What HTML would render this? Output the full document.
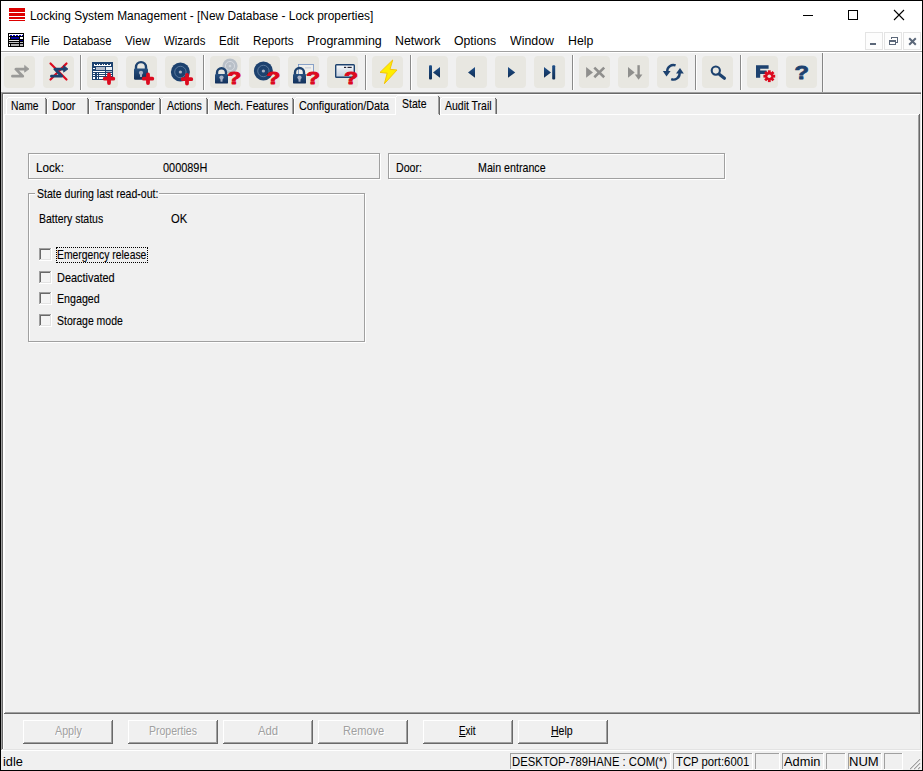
<!DOCTYPE html>
<html><head><meta charset="utf-8"><title>Locking System Management</title>
<style>
html,body{margin:0;padding:0;}
body{width:923px;height:771px;position:relative;overflow:hidden;background:#f0f0f0;font-family:"Liberation Sans",sans-serif;}
body>div,body>svg,body>span{position:absolute;box-sizing:content-box;}
svg{overflow:visible;}
.t{display:inline-block;white-space:nowrap;line-height:1;transform-origin:0 0;}
.d{-webkit-text-stroke:0.12px currentColor;}
.dis{text-shadow:1px 1px 0 #fff;-webkit-text-stroke:0;}
u{text-decoration:underline;text-underline-offset:1px;}
</style></head><body>
<div style="left:0px;top:0px;width:923px;height:771px;background:#f0f0f0;"></div>
<div style="left:1px;top:1px;width:921px;height:50px;background:#ffffff;"></div>
<div style="left:1px;top:51px;width:921px;height:1px;background:#a0a0a0;"></div>
<div style="left:1px;top:52px;width:921px;height:1px;background:#ffffff;"></div>
<div style="left:9px;top:8px;width:16px;height:4px;background:#dd0000;"></div>
<div style="left:9px;top:13px;width:16px;height:3px;background:#dd0000;"></div>
<div style="left:9px;top:17px;width:16px;height:2px;background:#dd0000;"></div>
<div style="left:9px;top:20px;width:16px;height:1px;background:#dd0000;"></div>
<span id="title" class="t " style="left:30.01px;top:9.84px;font-size:12px;color:#000;transform:scaleX(0.9898)">Locking System Management - [New Database - Lock properties]</span>
<div style="left:803px;top:15px;width:10px;height:1px;background:#000;"></div>
<div style="left:848px;top:10px;width:8px;height:8px;border:1px solid #000;background:transparent"></div>
<svg style="left:893px;top:9px" width="12" height="12" viewBox="0 0 12 12"><path d="M1 1 L11 11 M11 1 L1 11" stroke="#000" stroke-width="1.1" fill="none"/></svg>
<svg style="left:8px;top:33px" width="16" height="14" viewBox="0 0 16 14" shape-rendering="crispEdges">
<rect width="16" height="14" fill="#000"/>
<rect x="1" y="1" width="14" height="1" fill="#fff"/>
<rect x="1" y="2" width="14" height="1" fill="#0000c0"/>
<g fill="#fff"><rect x="1" y="2" width="1" height="1"/><rect x="4" y="2" width="1" height="1"/><rect x="7" y="2" width="1" height="1"/><rect x="10" y="2" width="1" height="1"/><rect x="13" y="2" width="1" height="1"/></g>
<rect x="1" y="4" width="1" height="2" fill="#fff"/><rect x="3" y="4" width="8" height="2" fill="#0000a0"/><rect x="12" y="4" width="3" height="2" fill="#fff"/>
<rect x="1" y="7" width="10" height="1" fill="#e0e0e0"/><rect x="12" y="7" width="3" height="1" fill="#000080"/>
<rect x="1" y="9" width="10" height="1" fill="#c0c0c0"/><rect x="12" y="9" width="3" height="1" fill="#c0c0c0"/>
<rect x="1" y="11" width="1" height="2" fill="#fff"/><rect x="3" y="11" width="8" height="2" fill="#b0b0b0"/><rect x="12" y="11" width="3" height="2" fill="#b0b0b0"/>
</svg>
<span id="m0" class="t " style="left:31.24px;top:35.14px;font-size:12px;color:#000;transform:scaleX(0.9650)">File</span>
<span id="m1" class="t " style="left:63.08px;top:35.14px;font-size:12px;color:#000;transform:scaleX(0.9440)">Database</span>
<span id="m2" class="t " style="left:125.17px;top:35.14px;font-size:12px;color:#000;transform:scaleX(0.9712)">View</span>
<span id="m3" class="t " style="left:163.67px;top:35.14px;font-size:12px;color:#000;transform:scaleX(0.9545)">Wizards</span>
<span id="m4" class="t " style="left:218.68px;top:35.14px;font-size:12px;color:#000;transform:scaleX(0.9633)">Edit</span>
<span id="m5" class="t " style="left:253.23px;top:35.14px;font-size:12px;color:#000;transform:scaleX(0.9673)">Reports</span>
<span id="m6" class="t " style="left:306.78px;top:35.14px;font-size:12px;color:#000;transform:scaleX(1.0377)">Programming</span>
<span id="m7" class="t " style="left:395.20px;top:35.14px;font-size:12px;color:#000;transform:scaleX(1.0310)">Network</span>
<span id="m8" class="t " style="left:454.47px;top:35.14px;font-size:12px;color:#000;transform:scaleX(1.0209)">Options</span>
<span id="m9" class="t " style="left:510.13px;top:35.14px;font-size:12px;color:#000;transform:scaleX(1.0290)">Window</span>
<span id="m10" class="t " style="left:567.87px;top:35.14px;font-size:12px;color:#000;transform:scaleX(1.0251)">Help</span>
<div style="left:865px;top:32px;width:16px;height:16px;border:1px solid #e4e4e4;background:#fdfdfd"></div>
<div style="left:884px;top:32px;width:16px;height:16px;border:1px solid #e4e4e4;background:#fdfdfd"></div>
<div style="left:903px;top:32px;width:16px;height:16px;border:1px solid #e4e4e4;background:#fdfdfd"></div>
<div style="left:870px;top:43px;width:6px;height:2px;background:#5b6779;"></div>
<svg style="left:888px;top:36px" width="11" height="10" viewBox="0 0 11 10" shape-rendering="crispEdges"><path d="M3.5 3 V1 H9.5 V6 H8" stroke="#5b6779" stroke-width="1" fill="none"/><rect x="3" y="0.5" width="7" height="1.5" fill="#5b6779"/><rect x="1.5" y="4.5" width="6" height="4" stroke="#5b6779" stroke-width="1" fill="none"/><rect x="1" y="4" width="7" height="1.5" fill="#5b6779"/></svg>
<svg style="left:908px;top:37px" width="9" height="9" viewBox="0 0 9 9"><path d="M1.2 1.2 L7.8 7.8 M7.8 1.2 L1.2 7.8" stroke="#5b6779" stroke-width="2" fill="none"/></svg>
<div style="left:4px;top:56px;width:31px;height:32px;background:#e8e7e1;border-radius:4px;"></div>
<div style="left:43px;top:56px;width:31px;height:32px;background:#e8e7e1;border-radius:4px;"></div>
<div style="left:87px;top:56px;width:31px;height:32px;background:#e8e7e1;border-radius:4px;"></div>
<div style="left:126px;top:56px;width:31px;height:32px;background:#e8e7e1;border-radius:4px;"></div>
<div style="left:165px;top:56px;width:31px;height:32px;background:#e8e7e1;border-radius:4px;"></div>
<div style="left:210px;top:56px;width:31px;height:32px;background:#e8e7e1;border-radius:4px;"></div>
<div style="left:249px;top:56px;width:31px;height:32px;background:#e8e7e1;border-radius:4px;"></div>
<div style="left:288px;top:56px;width:31px;height:32px;background:#e8e7e1;border-radius:4px;"></div>
<div style="left:327px;top:56px;width:31px;height:32px;background:#e8e7e1;border-radius:4px;"></div>
<div style="left:372px;top:56px;width:31px;height:32px;background:#e8e7e1;border-radius:4px;"></div>
<div style="left:417px;top:56px;width:31px;height:32px;background:#e8e7e1;border-radius:4px;"></div>
<div style="left:456px;top:56px;width:31px;height:32px;background:#e8e7e1;border-radius:4px;"></div>
<div style="left:495px;top:56px;width:31px;height:32px;background:#e8e7e1;border-radius:4px;"></div>
<div style="left:534px;top:56px;width:31px;height:32px;background:#e8e7e1;border-radius:4px;"></div>
<div style="left:579px;top:56px;width:31px;height:32px;background:#e8e7e1;border-radius:4px;"></div>
<div style="left:618px;top:56px;width:31px;height:32px;background:#e8e7e1;border-radius:4px;"></div>
<div style="left:657px;top:56px;width:31px;height:32px;background:#e8e7e1;border-radius:4px;"></div>
<div style="left:702px;top:56px;width:31px;height:32px;background:#e8e7e1;border-radius:4px;"></div>
<div style="left:747px;top:56px;width:31px;height:32px;background:#e8e7e1;border-radius:4px;"></div>
<div style="left:786px;top:56px;width:31px;height:32px;background:#e8e7e1;border-radius:4px;"></div>
<div style="left:80px;top:55px;width:1px;height:35px;background:#8a8a8a;"></div>
<div style="left:81px;top:55px;width:1px;height:35px;background:#fff;"></div>
<div style="left:203px;top:55px;width:1px;height:35px;background:#8a8a8a;"></div>
<div style="left:204px;top:55px;width:1px;height:35px;background:#fff;"></div>
<div style="left:365px;top:55px;width:1px;height:35px;background:#8a8a8a;"></div>
<div style="left:366px;top:55px;width:1px;height:35px;background:#fff;"></div>
<div style="left:410px;top:55px;width:1px;height:35px;background:#8a8a8a;"></div>
<div style="left:411px;top:55px;width:1px;height:35px;background:#fff;"></div>
<div style="left:572px;top:55px;width:1px;height:35px;background:#8a8a8a;"></div>
<div style="left:573px;top:55px;width:1px;height:35px;background:#fff;"></div>
<div style="left:695px;top:55px;width:1px;height:35px;background:#8a8a8a;"></div>
<div style="left:696px;top:55px;width:1px;height:35px;background:#fff;"></div>
<div style="left:740px;top:55px;width:1px;height:35px;background:#8a8a8a;"></div>
<div style="left:741px;top:55px;width:1px;height:35px;background:#fff;"></div>
<div style="left:822px;top:53px;width:1px;height:39px;background:#858585;"></div>
<div style="left:823px;top:53px;width:1px;height:39px;background:#f8f8f8;"></div>
<svg style="left:4px;top:56px" width="31" height="32" viewBox="0 0 31 32" ><path d="M8.4 20.2 H18.8 L11.8 13.1 H21" stroke="#9a9a98" stroke-width="2.7" fill="none" stroke-linecap="round" stroke-linejoin="round"/><path d="M20.6 9.4 L25 13 L20.6 16.2 Z" fill="#9a9a98" stroke="#9a9a98" stroke-width="0.7" stroke-linejoin="round"/></svg>
<svg style="left:43px;top:56px" width="31" height="32" viewBox="0 0 31 32" ><path d="M7.5 7.5 L23.5 23.5 M23.5 7.5 L7.5 23.5" stroke="#dc0a1e" stroke-width="2.2" stroke-linecap="round"/><path d="M8.4 20.2 H18.8 L11.8 13.1 H21" stroke="#1d426f" stroke-width="2.7" fill="none" stroke-linecap="round" stroke-linejoin="round"/><path d="M20.6 9.4 L25 13 L20.6 16.2 Z" fill="#1d426f" stroke="#1d426f" stroke-width="0.7" stroke-linejoin="round"/></svg>
<svg style="left:87px;top:56px" width="31" height="32" viewBox="0 0 31 32" ><g shape-rendering="crispEdges"><rect x="5" y="6" width="21" height="18" fill="#1d426f"/><rect x="6.5" y="7.5" width="18" height="2.6" rx="1.2" fill="#fff"/><rect x="8.0" y="8.4" width="1.5" height="0.9" fill="#1d426f"/><rect x="10.6" y="8.4" width="1.5" height="0.9" fill="#1d426f"/><rect x="13.2" y="8.4" width="1.5" height="0.9" fill="#1d426f"/><rect x="15.8" y="8.4" width="1.5" height="0.9" fill="#1d426f"/><rect x="18.4" y="8.4" width="1.5" height="0.9" fill="#1d426f"/><rect x="21.0" y="8.4" width="1.5" height="0.9" fill="#1d426f"/><rect x="6" y="12" width="2" height="1" fill="#fff"/><rect x="9" y="11" width="9" height="3" fill="#b4bccb"/><rect x="19" y="11" width="6" height="3" fill="#e8ecf2"/><rect x="6" y="15" width="12" height="1" fill="#fff"/><rect x="19" y="15" width="6" height="1" fill="#b4bccb"/><rect x="6" y="17" width="2" height="1" fill="#fff"/><rect x="9.5" y="17" width="1.5" height="1" fill="#fff"/><rect x="12" y="17" width="6" height="1" fill="#fff"/><rect x="19" y="17" width="6" height="1" fill="#fff"/><rect x="6" y="19" width="2" height="1" fill="#fff"/><rect x="9.5" y="19" width="1.5" height="1" fill="#fff"/><rect x="12" y="19" width="6" height="1" fill="#fff"/><rect x="19" y="19" width="6" height="1" fill="#fff"/><rect x="6" y="21" width="2" height="2" fill="#fff"/><rect x="9.5" y="21" width="1.5" height="2" fill="#fff"/><rect x="12" y="21" width="6" height="2" fill="#fff"/><rect x="19" y="21" width="6" height="2" fill="#fff"/></g><path d="M17.7 22.7 H26.3 M22 18.4 V27.0" stroke="#dc0a1e" stroke-width="3.8" stroke-linecap="round"/></svg>
<svg style="left:126px;top:56px" width="31" height="32" viewBox="0 0 31 32" ><defs><linearGradient id="ng" x1="0" y1="0" x2="0" y2="1"><stop offset="0" stop-color="#27507f"/><stop offset="1" stop-color="#12305a"/></linearGradient></defs><path d="M10.0 12.9 V11.10 A5.0 5.0 0 0 1 20.0 11.10 V12.9" stroke="#1d426f" stroke-width="2.4" fill="none"/><rect x="8" y="12.4" width="14" height="11.3" rx="1.2" fill="url(#ng)"/><circle cx="15.0" cy="16.85" r="2.1" fill="#aab3c6"/><rect x="14.0" y="17.55" width="2" height="3.4" fill="#aab3c6"/><path d="M17.7 22.7 H26.3 M22 18.4 V27.0" stroke="#dc0a1e" stroke-width="3.8" stroke-linecap="round"/></svg>
<svg style="left:165px;top:56px" width="31" height="32" viewBox="0 0 31 32" ><circle cx="15.4" cy="16" r="9.5" fill="#1d426f"/><circle cx="15.4" cy="16" r="5.70" fill="none" stroke="#5f7d9f" stroke-width="0.9"/><circle cx="15.4" cy="16" r="1.62" fill="#aab3c6"/><path d="M17.7 23.2 H26.3 M22 18.9 V27.5" stroke="#dc0a1e" stroke-width="3.8" stroke-linecap="round"/></svg>
<svg style="left:210px;top:56px" width="31" height="32" viewBox="0 0 31 32" ><defs><linearGradient id="ng" x1="0" y1="0" x2="0" y2="1"><stop offset="0" stop-color="#27507f"/><stop offset="1" stop-color="#12305a"/></linearGradient></defs><circle cx="20" cy="10" r="7.6" fill="#b9c0c8"/><circle cx="20" cy="10" r="4.56" fill="none" stroke="#d9dde2" stroke-width="0.9"/><circle cx="20" cy="10" r="1.29" fill="#d3d7dd"/><path d="M7.0 18.5 V16.70 A4.5 4.5 0 0 1 16.0 16.70 V18.5" stroke="#1d426f" stroke-width="2.4" fill="none"/><rect x="5" y="18" width="13" height="9.6" rx="1.2" fill="url(#ng)"/><circle cx="11.5" cy="21.6" r="2.1" fill="#aab3c6"/><rect x="10.5" y="22.3" width="2" height="3.4" fill="#aab3c6"/><text transform="translate(17.6,27.5) scale(1.32,1)" font-family="Liberation Sans, sans-serif" font-weight="bold" font-size="17" fill="#dc0a1e" stroke="#dc0a1e" stroke-width="1.0" stroke-linejoin="round">?</text></svg>
<svg style="left:249px;top:56px" width="31" height="32" viewBox="0 0 31 32" ><circle cx="14.4" cy="15" r="9.5" fill="#1d426f"/><circle cx="14.4" cy="15" r="5.70" fill="none" stroke="#5f7d9f" stroke-width="0.9"/><circle cx="14.4" cy="15" r="1.62" fill="#aab3c6"/><text transform="translate(17.4,27.5) scale(1.32,1)" font-family="Liberation Sans, sans-serif" font-weight="bold" font-size="17" fill="#dc0a1e" stroke="#dc0a1e" stroke-width="1.0" stroke-linejoin="round">?</text></svg>
<svg style="left:288px;top:56px" width="31" height="32" viewBox="0 0 31 32" ><defs><linearGradient id="ng" x1="0" y1="0" x2="0" y2="1"><stop offset="0" stop-color="#27507f"/><stop offset="1" stop-color="#12305a"/></linearGradient></defs><rect x="10.5" y="8.5" width="15" height="10" fill="#efefec" stroke="#6f8fc0" stroke-width="0.8"/><rect x="17" y="11.5" width="6" height="0.8" fill="#b8c0cf"/><path d="M7.0 18.5 V16.50 A4.5 4.5 0 0 1 16.0 16.50 V18.5" stroke="#1d426f" stroke-width="2.4" fill="none"/><rect x="5" y="18" width="13" height="9.6" rx="1.2" fill="url(#ng)"/><circle cx="11.5" cy="21.6" r="2.1" fill="#aab3c6"/><rect x="10.5" y="22.3" width="2" height="3.4" fill="#aab3c6"/><text transform="translate(18.2,27.5) scale(1.32,1)" font-family="Liberation Sans, sans-serif" font-weight="bold" font-size="17" fill="#dc0a1e" stroke="#dc0a1e" stroke-width="1.0" stroke-linejoin="round">?</text></svg>
<svg style="left:327px;top:56px" width="31" height="32" viewBox="0 0 31 32" ><defs><linearGradient id="cg" x1="0" y1="0" x2="0" y2="1"><stop offset="0" stop-color="#ffffff"/><stop offset="0.35" stop-color="#e4e9f0"/><stop offset="1" stop-color="#c3cfdf"/></linearGradient></defs><rect x="8.7" y="8.7" width="18.6" height="12.6" rx="0.8" fill="url(#cg)" stroke="#1d426f" stroke-width="1.4"/><rect x="17" y="10.8" width="2.2" height="1.2" fill="#223"/><rect x="20.5" y="10.8" width="4.2" height="1.2" fill="#223"/><text transform="translate(17.2,27.5) scale(1.32,1)" font-family="Liberation Sans, sans-serif" font-weight="bold" font-size="17" fill="#dc0a1e" stroke="#dc0a1e" stroke-width="1.0" stroke-linejoin="round">?</text></svg>
<svg style="left:372px;top:56px" width="31" height="32" viewBox="0 0 31 32" ><path d="M20.7 4 L8 16.4 L15.2 17.2 L12.4 27.7 L25 14 L18 13.3 Z" fill="#ffee00" stroke="#f4c40a" stroke-width="1" stroke-linejoin="round"/></svg>
<svg style="left:417px;top:56px" width="31" height="32" viewBox="0 0 31 32" ><defs><linearGradient id="nv" x1="0" y1="0" x2="0" y2="1"><stop offset="0" stop-color="#1f4f88"/><stop offset="1" stop-color="#102e55"/></linearGradient></defs><rect x="12" y="9.2" width="3" height="14.4" rx="1" fill="url(#nv)"/><path d="M16 16.4 L23 11 V21.8 Z" fill="url(#nv)"/></svg>
<svg style="left:456px;top:56px" width="31" height="32" viewBox="0 0 31 32" ><defs><linearGradient id="nv" x1="0" y1="0" x2="0" y2="1"><stop offset="0" stop-color="#1f4f88"/><stop offset="1" stop-color="#102e55"/></linearGradient></defs><path d="M12 16.4 L19 11 V21.8 Z" fill="url(#nv)"/></svg>
<svg style="left:495px;top:56px" width="31" height="32" viewBox="0 0 31 32" ><defs><linearGradient id="nv" x1="0" y1="0" x2="0" y2="1"><stop offset="0" stop-color="#1f4f88"/><stop offset="1" stop-color="#102e55"/></linearGradient></defs><path d="M20.2 16.4 L13 11 V21.8 Z" fill="url(#nv)"/></svg>
<svg style="left:534px;top:56px" width="31" height="32" viewBox="0 0 31 32" ><defs><linearGradient id="nv" x1="0" y1="0" x2="0" y2="1"><stop offset="0" stop-color="#1f4f88"/><stop offset="1" stop-color="#102e55"/></linearGradient></defs><path d="M17 16.4 L10 11 V21.8 Z" fill="url(#nv)"/><rect x="18.2" y="9.2" width="3" height="14.4" rx="1" fill="url(#nv)"/></svg>
<svg style="left:579px;top:56px" width="31" height="32" viewBox="0 0 31 32" ><path d="M14 16.4 L7.1 11 V21.8 Z" fill="#8f8f8d"/><path d="M15.3 11.6 L25.2 21.2 M25.2 11.6 L15.3 21.2" stroke="#8f8f8d" stroke-width="2.6" stroke-linecap="butt"/></svg>
<svg style="left:618px;top:56px" width="31" height="32" viewBox="0 0 31 32" ><path d="M16.7 16.4 L10 11 V21.8 Z" fill="#8f8f8d"/><path d="M20.6 9.2 V20" stroke="#8f8f8d" stroke-width="2.4"/><path d="M16.8 18.6 H24.4 L20.6 23.8 Z" fill="#8f8f8d"/></svg>
<svg style="left:657px;top:56px" width="31" height="32" viewBox="0 0 31 32" ><path d="M18.6 9.4 A6.2 6.2 0 0 0 10.2 15.5" stroke="#1d426f" stroke-width="2.4" fill="none"/><path d="M5.8 15 H13.6 L9.5 20.4 Z" fill="#1d426f"/><path d="M14.2 23.2 A6.2 6.2 0 0 0 22.6 17" stroke="#1d426f" stroke-width="2.4" fill="none"/><path d="M19 17.6 H26.8 L23 12 Z" fill="#1d426f"/></svg>
<svg style="left:702px;top:56px" width="31" height="32" viewBox="0 0 31 32" ><circle cx="13.8" cy="14.6" r="4.1" fill="none" stroke="#1d426f" stroke-width="2.1"/><path d="M17.6 18.4 L22.4 22.2" stroke="#1d426f" stroke-width="3.2" stroke-linecap="round"/></svg>
<svg style="left:747px;top:56px" width="31" height="32" viewBox="0 0 31 32" ><path d="M9 9.2 H21.6 V12.8 H13.2 V14.6 H19.6 V18 H13.2 V21.8 H9 Z" fill="#1d426f"/><g transform="translate(22.3,20.2)"><rect x="-1.4" y="-5.9" width="2.8" height="3" transform="rotate(0)" fill="#dc0a1e"/><rect x="-1.4" y="-5.9" width="2.8" height="3" transform="rotate(45)" fill="#dc0a1e"/><rect x="-1.4" y="-5.9" width="2.8" height="3" transform="rotate(90)" fill="#dc0a1e"/><rect x="-1.4" y="-5.9" width="2.8" height="3" transform="rotate(135)" fill="#dc0a1e"/><rect x="-1.4" y="-5.9" width="2.8" height="3" transform="rotate(180)" fill="#dc0a1e"/><rect x="-1.4" y="-5.9" width="2.8" height="3" transform="rotate(225)" fill="#dc0a1e"/><rect x="-1.4" y="-5.9" width="2.8" height="3" transform="rotate(270)" fill="#dc0a1e"/><rect x="-1.4" y="-5.9" width="2.8" height="3" transform="rotate(315)" fill="#dc0a1e"/><circle r="4.1" fill="#dc0a1e"/><circle r="1.8" fill="#e8e7e1"/></g></svg>
<svg style="left:786px;top:56px" width="31" height="32" viewBox="0 0 31 32" ><text transform="translate(8.6,22.5) scale(1.34,1)" font-family="Liberation Sans, sans-serif" font-weight="bold" font-size="17.6" fill="#1d426f" stroke="#1d426f" stroke-width="0.8" stroke-linejoin="round">?</text></svg>
<div style="left:1px;top:92px;width:920px;height:1px;background:#a0a0a0;"></div>
<div style="left:2px;top:93px;width:919px;height:1px;background:#696969;"></div>
<div style="left:1px;top:92px;width:1px;height:658px;background:#a0a0a0;"></div>
<div style="left:2px;top:93px;width:1px;height:656px;background:#696969;"></div>
<div style="left:3px;top:94px;width:918px;height:1px;background:#ffffff;"></div>
<div style="left:3px;top:94px;width:1px;height:655px;background:#ffffff;"></div>
<div style="left:1px;top:750px;width:920px;height:1px;background:#ffffff;"></div>
<div style="left:2px;top:749px;width:918px;height:1px;background:#e3e3e3;"></div>
<div style="left:921px;top:53px;width:1px;height:698px;background:#ffffff;"></div>
<div style="left:920px;top:94px;width:1px;height:656px;background:#e3e3e3;"></div>
<div style="left:4px;top:114px;width:916px;height:1px;background:#ffffff;"></div>
<div style="left:4px;top:114px;width:1px;height:599px;background:#ffffff;"></div>
<div style="left:918px;top:115px;width:1px;height:598px;background:#a0a0a0;"></div>
<div style="left:919px;top:114px;width:1px;height:600px;background:#696969;"></div>
<div style="left:5px;top:712px;width:914px;height:1px;background:#a0a0a0;"></div>
<div style="left:4px;top:713px;width:916px;height:1px;background:#696969;"></div>
<div style="left:6px;top:99px;width:1px;height:15px;background:#ffffff;"></div>
<div style="left:8px;top:97px;width:37px;height:1px;background:#ffffff;"></div>
<div style="left:7px;top:98px;width:1px;height:1px;background:#ffffff;"></div>
<div style="left:45px;top:99px;width:1px;height:15px;background:#a0a0a0;"></div>
<div style="left:46px;top:99px;width:1px;height:15px;background:#696969;"></div>
<div style="left:45px;top:98px;width:1px;height:1px;background:#696969;"></div>
<span id="tab0" class="t d" style="left:11.05px;top:99.00px;font-size:13px;color:#000;transform:scaleX(0.7926)">Name</span>
<div style="left:47px;top:99px;width:1px;height:15px;background:#ffffff;"></div>
<div style="left:49px;top:97px;width:38px;height:1px;background:#ffffff;"></div>
<div style="left:48px;top:98px;width:1px;height:1px;background:#ffffff;"></div>
<div style="left:87px;top:99px;width:1px;height:15px;background:#a0a0a0;"></div>
<div style="left:88px;top:99px;width:1px;height:15px;background:#696969;"></div>
<div style="left:87px;top:98px;width:1px;height:1px;background:#696969;"></div>
<span id="tab1" class="t d" style="left:51.92px;top:99.00px;font-size:13px;color:#000;transform:scaleX(0.8308)">Door</span>
<div style="left:89px;top:99px;width:1px;height:15px;background:#ffffff;"></div>
<div style="left:91px;top:97px;width:68px;height:1px;background:#ffffff;"></div>
<div style="left:90px;top:98px;width:1px;height:1px;background:#ffffff;"></div>
<div style="left:159px;top:99px;width:1px;height:15px;background:#a0a0a0;"></div>
<div style="left:160px;top:99px;width:1px;height:15px;background:#696969;"></div>
<div style="left:159px;top:98px;width:1px;height:1px;background:#696969;"></div>
<span id="tab2" class="t d" style="left:95.14px;top:99.00px;font-size:13px;color:#000;transform:scaleX(0.8180)">Transponder</span>
<div style="left:161px;top:99px;width:1px;height:15px;background:#ffffff;"></div>
<div style="left:163px;top:97px;width:43px;height:1px;background:#ffffff;"></div>
<div style="left:162px;top:98px;width:1px;height:1px;background:#ffffff;"></div>
<div style="left:206px;top:99px;width:1px;height:15px;background:#a0a0a0;"></div>
<div style="left:207px;top:99px;width:1px;height:15px;background:#696969;"></div>
<div style="left:206px;top:98px;width:1px;height:1px;background:#696969;"></div>
<span id="tab3" class="t d" style="left:167.27px;top:99.00px;font-size:13px;color:#000;transform:scaleX(0.8131)">Actions</span>
<div style="left:208px;top:99px;width:1px;height:15px;background:#ffffff;"></div>
<div style="left:210px;top:97px;width:82px;height:1px;background:#ffffff;"></div>
<div style="left:209px;top:98px;width:1px;height:1px;background:#ffffff;"></div>
<div style="left:292px;top:99px;width:1px;height:15px;background:#a0a0a0;"></div>
<div style="left:293px;top:99px;width:1px;height:15px;background:#696969;"></div>
<div style="left:292px;top:98px;width:1px;height:1px;background:#696969;"></div>
<span id="tab4" class="t d" style="left:213.51px;top:99.00px;font-size:13px;color:#000;transform:scaleX(0.8228)">Mech. Features</span>
<div style="left:294px;top:99px;width:1px;height:15px;background:#ffffff;"></div>
<div style="left:296px;top:97px;width:99px;height:1px;background:#ffffff;"></div>
<div style="left:295px;top:98px;width:1px;height:1px;background:#ffffff;"></div>
<span id="tab5" class="t d" style="left:298.96px;top:99.00px;font-size:13px;color:#000;transform:scaleX(0.8310)">Configuration/Data</span>
<div style="left:440px;top:99px;width:1px;height:15px;background:#ffffff;"></div>
<div style="left:442px;top:97px;width:53px;height:1px;background:#ffffff;"></div>
<div style="left:441px;top:98px;width:1px;height:1px;background:#ffffff;"></div>
<div style="left:495px;top:99px;width:1px;height:15px;background:#a0a0a0;"></div>
<div style="left:496px;top:99px;width:1px;height:15px;background:#696969;"></div>
<div style="left:495px;top:98px;width:1px;height:1px;background:#696969;"></div>
<span id="tab6" class="t d" style="left:444.85px;top:99.00px;font-size:13px;color:#000;transform:scaleX(0.8058)">Audit Trail</span>
<div style="left:395px;top:95px;width:45px;height:20px;background:#f0f0f0;"></div>
<div style="left:395px;top:97px;width:1px;height:18px;background:#ffffff;"></div>
<div style="left:397px;top:95px;width:40px;height:1px;background:#ffffff;"></div>
<div style="left:396px;top:96px;width:1px;height:1px;background:#ffffff;"></div>
<div style="left:438px;top:97px;width:1px;height:17px;background:#a0a0a0;"></div>
<div style="left:439px;top:97px;width:1px;height:18px;background:#696969;"></div>
<div style="left:438px;top:96px;width:1px;height:1px;background:#696969;"></div>
<span id="tabS" class="t d" style="left:402.13px;top:97.00px;font-size:13px;color:#000;transform:scaleX(0.8069)">State</span>
<div style="left:29px;top:154px;width:350px;height:24px;border:1px solid #fff"></div>
<div style="left:28px;top:153px;width:350px;height:24px;border:1px solid #a0a0a0"></div>
<div style="left:389px;top:154px;width:335px;height:24px;border:1px solid #fff"></div>
<div style="left:388px;top:153px;width:335px;height:24px;border:1px solid #a0a0a0"></div>
<div style="left:29px;top:194px;width:335px;height:147px;border:1px solid #fff"></div>
<div style="left:28px;top:193px;width:335px;height:147px;border:1px solid #a0a0a0"></div>
<div style="left:35px;top:192px;width:124px;height:4px;background:#f0f0f0;"></div>
<span id="lock" class="t d" style="left:36.32px;top:161.40px;font-size:13px;color:#000;transform:scaleX(0.8978)">Lock:</span>
<span id="lockv" class="t d" style="left:162.96px;top:161.40px;font-size:13px;color:#000;transform:scaleX(0.8393)">000089H</span>
<span id="door" class="t d" style="left:395.53px;top:161.40px;font-size:13px;color:#000;transform:scaleX(0.8186)">Door:</span>
<span id="doorv" class="t d" style="left:477.91px;top:161.40px;font-size:13px;color:#000;transform:scaleX(0.8207)">Main entrance</span>
<span id="grp" class="t d" style="left:36.93px;top:187.40px;font-size:13px;color:#000;transform:scaleX(0.8121)">State during last read-out:</span>
<span id="bat" class="t d" style="left:38.60px;top:212.40px;font-size:13px;color:#000;transform:scaleX(0.8074)">Battery status</span>
<span id="batv" class="t d" style="left:171.05px;top:212.40px;font-size:13px;color:#000;transform:scaleX(0.8596)">OK</span>
<div style="left:39px;top:248px;width:13px;height:13px;background:#ffffff;"></div>
<div style="left:39px;top:248px;width:12px;height:12px;background:#a0a0a0;"></div>
<div style="left:40px;top:249px;width:11px;height:11px;background:#e3e3e3;"></div>
<div style="left:40px;top:249px;width:10px;height:10px;background:#696969;"></div>
<div style="left:41px;top:250px;width:9px;height:9px;background:#f4f4f4;"></div>
<span id="cb0" class="t d" style="left:57.24px;top:248.40px;font-size:13px;color:#000;transform:scaleX(0.7979)">Emergency release</span>
<div style="left:39px;top:271px;width:13px;height:13px;background:#ffffff;"></div>
<div style="left:39px;top:271px;width:12px;height:12px;background:#a0a0a0;"></div>
<div style="left:40px;top:272px;width:11px;height:11px;background:#e3e3e3;"></div>
<div style="left:40px;top:272px;width:10px;height:10px;background:#696969;"></div>
<div style="left:41px;top:273px;width:9px;height:9px;background:#f4f4f4;"></div>
<span id="cb1" class="t d" style="left:57.31px;top:271.40px;font-size:13px;color:#000;transform:scaleX(0.8404)">Deactivated</span>
<div style="left:39px;top:292px;width:13px;height:13px;background:#ffffff;"></div>
<div style="left:39px;top:292px;width:12px;height:12px;background:#a0a0a0;"></div>
<div style="left:40px;top:293px;width:11px;height:11px;background:#e3e3e3;"></div>
<div style="left:40px;top:293px;width:10px;height:10px;background:#696969;"></div>
<div style="left:41px;top:294px;width:9px;height:9px;background:#f4f4f4;"></div>
<span id="cb2" class="t d" style="left:57.33px;top:292.40px;font-size:13px;color:#000;transform:scaleX(0.8199)">Engaged</span>
<div style="left:39px;top:314px;width:13px;height:13px;background:#ffffff;"></div>
<div style="left:39px;top:314px;width:12px;height:12px;background:#a0a0a0;"></div>
<div style="left:40px;top:315px;width:11px;height:11px;background:#e3e3e3;"></div>
<div style="left:40px;top:315px;width:10px;height:10px;background:#696969;"></div>
<div style="left:41px;top:316px;width:9px;height:9px;background:#f4f4f4;"></div>
<span id="cb3" class="t d" style="left:57.33px;top:314.40px;font-size:13px;color:#000;transform:scaleX(0.8061)">Storage mode</span>
<div style="left:56px;top:247px;width:90px;height:14px;border:1px dotted #000;background:transparent"></div>
<div style="left:23px;top:720px;width:90px;height:24px;background:#696969;"></div>
<div style="left:23px;top:720px;width:89px;height:23px;background:#ffffff;"></div>
<div style="left:24px;top:721px;width:88px;height:22px;background:#a0a0a0;"></div>
<div style="left:24px;top:721px;width:87px;height:21px;background:#f0f0f0;"></div>
<span id="btn0" class="t dis d" style="left:54.73px;top:724.40px;font-size:13px;color:#a0a0a0;transform:scaleX(0.8236)">Apply</span>
<div style="left:128px;top:720px;width:90px;height:24px;background:#696969;"></div>
<div style="left:128px;top:720px;width:89px;height:23px;background:#ffffff;"></div>
<div style="left:129px;top:721px;width:88px;height:22px;background:#a0a0a0;"></div>
<div style="left:129px;top:721px;width:87px;height:21px;background:#f0f0f0;"></div>
<span id="btn1" class="t dis d" style="left:148.84px;top:724.40px;font-size:13px;color:#a0a0a0;transform:scaleX(0.8084)">Properties</span>
<div style="left:223px;top:720px;width:90px;height:24px;background:#696969;"></div>
<div style="left:223px;top:720px;width:89px;height:23px;background:#ffffff;"></div>
<div style="left:224px;top:721px;width:88px;height:22px;background:#a0a0a0;"></div>
<div style="left:224px;top:721px;width:87px;height:21px;background:#f0f0f0;"></div>
<span id="btn2" class="t dis d" style="left:257.58px;top:724.40px;font-size:13px;color:#a0a0a0;transform:scaleX(0.8696)">Add</span>
<div style="left:318px;top:720px;width:90px;height:24px;background:#696969;"></div>
<div style="left:318px;top:720px;width:89px;height:23px;background:#ffffff;"></div>
<div style="left:319px;top:721px;width:88px;height:22px;background:#a0a0a0;"></div>
<div style="left:319px;top:721px;width:87px;height:21px;background:#f0f0f0;"></div>
<span id="btn3" class="t dis d" style="left:342.73px;top:724.40px;font-size:13px;color:#a0a0a0;transform:scaleX(0.8519)">Remove</span>
<div style="left:423px;top:720px;width:90px;height:24px;background:#696969;"></div>
<div style="left:423px;top:720px;width:89px;height:23px;background:#ffffff;"></div>
<div style="left:424px;top:721px;width:88px;height:22px;background:#a0a0a0;"></div>
<div style="left:424px;top:721px;width:87px;height:21px;background:#f0f0f0;"></div>
<span id="btn4" class="t d" style="left:458.73px;top:724.40px;font-size:13px;color:#000;transform:scaleX(0.7600)"><u>E</u>xit</span>
<div style="left:518px;top:720px;width:90px;height:24px;background:#696969;"></div>
<div style="left:518px;top:720px;width:89px;height:23px;background:#ffffff;"></div>
<div style="left:519px;top:721px;width:88px;height:22px;background:#a0a0a0;"></div>
<div style="left:519px;top:721px;width:87px;height:21px;background:#f0f0f0;"></div>
<span id="btn5" class="t d" style="left:551.34px;top:724.40px;font-size:13px;color:#000;transform:scaleX(0.8110)"><u>H</u>elp</span>
<span id="idle" class="t " style="left:2.68px;top:755.54px;font-size:12px;color:#000;transform:scaleX(1.0675)">idle</span>
<div style="left:510px;top:753px;width:160px;height:1px;background:#a0a0a0;"></div>
<div style="left:510px;top:753px;width:1px;height:16px;background:#a0a0a0;"></div>
<div style="left:510px;top:769px;width:161px;height:1px;background:#ffffff;"></div>
<div style="left:670px;top:753px;width:1px;height:17px;background:#ffffff;"></div>
<span id="sb0" class="t " style="left:511.99px;top:755.54px;font-size:12px;color:#000;transform:scaleX(0.9381)">DESKTOP-789HANE : COM(*)</span>
<div style="left:673px;top:753px;width:79px;height:1px;background:#a0a0a0;"></div>
<div style="left:673px;top:753px;width:1px;height:16px;background:#a0a0a0;"></div>
<div style="left:673px;top:769px;width:80px;height:1px;background:#ffffff;"></div>
<div style="left:752px;top:753px;width:1px;height:17px;background:#ffffff;"></div>
<span id="sb1" class="t " style="left:676.03px;top:755.54px;font-size:12px;color:#000;transform:scaleX(0.9408)">TCP port:6001</span>
<div style="left:755px;top:753px;width:24px;height:1px;background:#a0a0a0;"></div>
<div style="left:755px;top:753px;width:1px;height:16px;background:#a0a0a0;"></div>
<div style="left:755px;top:769px;width:25px;height:1px;background:#ffffff;"></div>
<div style="left:779px;top:753px;width:1px;height:17px;background:#ffffff;"></div>
<div style="left:782px;top:753px;width:41px;height:1px;background:#a0a0a0;"></div>
<div style="left:782px;top:753px;width:1px;height:16px;background:#a0a0a0;"></div>
<div style="left:782px;top:769px;width:42px;height:1px;background:#ffffff;"></div>
<div style="left:823px;top:753px;width:1px;height:17px;background:#ffffff;"></div>
<span id="sb3" class="t " style="left:784.09px;top:755.54px;font-size:12px;color:#000;transform:scaleX(1.0697)">Admin</span>
<div style="left:826px;top:753px;width:19px;height:1px;background:#a0a0a0;"></div>
<div style="left:826px;top:753px;width:1px;height:16px;background:#a0a0a0;"></div>
<div style="left:826px;top:769px;width:20px;height:1px;background:#ffffff;"></div>
<div style="left:845px;top:753px;width:1px;height:17px;background:#ffffff;"></div>
<div style="left:848px;top:753px;width:33px;height:1px;background:#a0a0a0;"></div>
<div style="left:848px;top:753px;width:1px;height:16px;background:#a0a0a0;"></div>
<div style="left:848px;top:769px;width:34px;height:1px;background:#ffffff;"></div>
<div style="left:881px;top:753px;width:1px;height:17px;background:#ffffff;"></div>
<span id="sb5" class="t " style="left:848.61px;top:755.54px;font-size:12px;color:#000;transform:scaleX(1.0889)">NUM</span>
<div style="left:884px;top:753px;width:18px;height:1px;background:#a0a0a0;"></div>
<div style="left:884px;top:753px;width:1px;height:16px;background:#a0a0a0;"></div>
<div style="left:884px;top:769px;width:19px;height:1px;background:#ffffff;"></div>
<div style="left:902px;top:753px;width:1px;height:17px;background:#ffffff;"></div>
<svg style="left:907px;top:756px" width="14" height="14" viewBox="0 0 14 14" ><path d="M13 3 L3 13 M13 7 L7 13 M13 11 L11 13" stroke="#a0a0a0" stroke-width="1.3"/><path d="M13 1.8 L1.8 13 M13 5.8 L5.8 13 M13 9.8 L9.8 13" stroke="#fff" stroke-width="0.8"/></svg>
<div style="left:0px;top:0px;width:923px;height:1px;background:#000;"></div>
<div style="left:0px;top:0px;width:1px;height:771px;background:#000;"></div>
<div style="left:922px;top:0px;width:1px;height:771px;background:#000;"></div>
<div style="left:0px;top:770px;width:923px;height:1px;background:#000;"></div>
</body></html>
